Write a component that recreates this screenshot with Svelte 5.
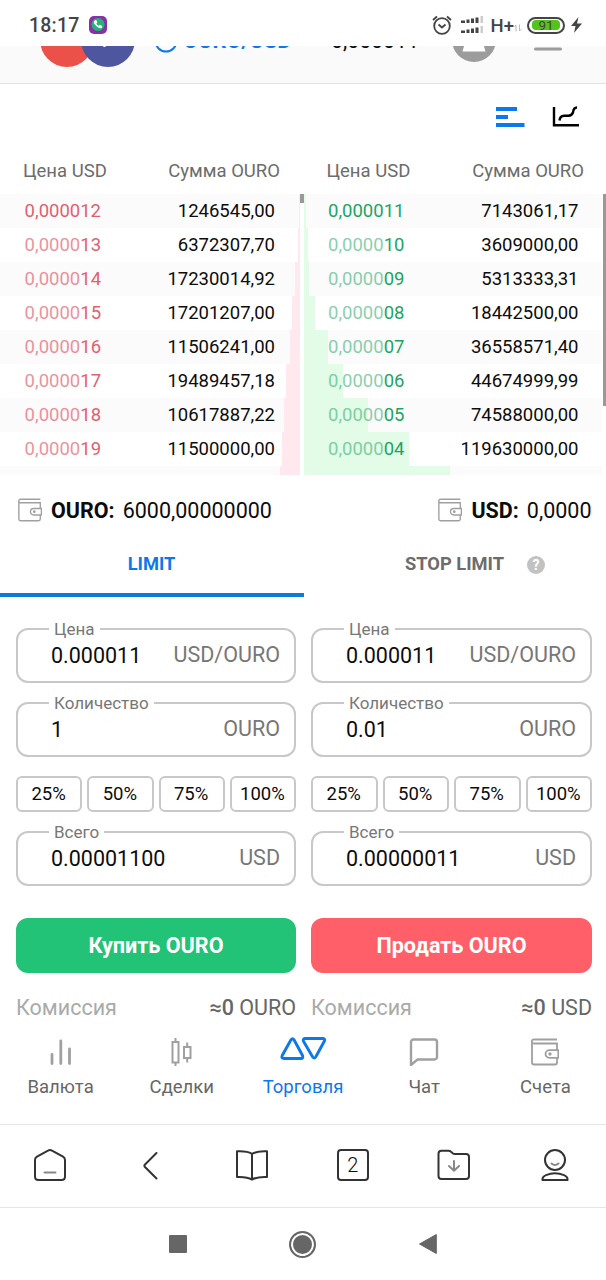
<script lang="ts">
    const asks = [
        { dim: "", price: "0,000012", amount: "1246545,00", depth: 1 },
        { dim: "0,0000", price: "13", amount: "6372307,70", depth: 2 },
        { dim: "0,0000", price: "14", amount: "17230014,92", depth: 5 },
        { dim: "0,0000", price: "15", amount: "17201207,00", depth: 8 },
        { dim: "0,0000", price: "16", amount: "11506241,00", depth: 10 },
        { dim: "0,0000", price: "17", amount: "19489457,18", depth: 14 },
        { dim: "0,0000", price: "18", amount: "10617887,22", depth: 16 },
        { dim: "0,0000", price: "19", amount: "11500000,00", depth: 18 },
        { dim: "", price: "", amount: "", depth: 20 },
    ];

    const bids = [
        { dim: "", price: "0,000011", amount: "7143061,17", depth: 2 },
        { dim: "0,0000", price: "10", amount: "3609000,00", depth: 4 },
        { dim: "0,0000", price: "09", amount: "5313333,31", depth: 5 },
        { dim: "0,0000", price: "08", amount: "18442500,00", depth: 11 },
        { dim: "0,0000", price: "07", amount: "36558571,40", depth: 24 },
        { dim: "0,0000", price: "06", amount: "44674999,99", depth: 39 },
        { dim: "0,0000", price: "05", amount: "74588000,00", depth: 64 },
        { dim: "0,0000", price: "04", amount: "119630000,00", depth: 105 },
        { dim: "", price: "", amount: "", depth: 146 },
    ];

    const forms = [
        {
            side: "buy",
            action: "Купить OURO",
            amount: "1",
            total: "0.00001100",
            feeUnit: "OURO",
        },
        {
            side: "sell",
            action: "Продать OURO",
            amount: "0.01",
            total: "0.00000011",
            feeUnit: "USD",
        },
    ];

    const percents = ["25%", "50%", "75%", "100%"];

    let tab = $state("limit");
</script>

{#snippet wallet(size)}
    <svg class="wallet" width={size} height={size} viewBox="0 0 28 28">
        <path
            d="M26 1.500H3.500A2 2 0 0 0 1 4v20.500a2 2 0 0 0 2 2h21a2 2 0 0 0 2-2V20M1 4.500Q1.500 5.500 3.500 5.500H26v6.500"
        />
        <path d="M27.300 12.200h-9a3.800 3.800 0 0 0 0 7.600h9z" />
        <circle cx="19" cy="16" r=".8" />
    </svg>
{/snippet}

{#snippet book(rows, side)}
    <div class="book-side {side}">
        {#each rows as row}
            <div class="book-row">
                <div class="depth" style="width: {row.depth}px"></div>
                <span class="price"><span class="dim">{row.dim}</span>{row.price}</span>
                <span class="amount">{row.amount}</span>
            </div>
        {/each}
    </div>
{/snippet}

{#snippet field(label, value, unit)}
    <fieldset class="field">
        <legend>{label}</legend>
        <div class="field-body">
            <span class="value">{value}</span>
            <span class="unit">{unit}</span>
        </div>
    </fieldset>
{/snippet}

<div class="screen">
    <div class="status">
        <span class="clock">18:17</span>
        <svg class="call" width="18" height="18" viewBox="0 0 18 18">
            <rect width="18" height="18" rx="5" fill="#8b2fa8" />
            <circle cx="9" cy="8.500" r="6.500" fill="#22b573" />
            <path
                d="M5.500 4.500l1.700-.5 1.200 2.300-1 1.100q.8 1.600 2.400 2.400l1.100-1 2.300 1.200-.5 1.900q-2 .9-4.600-1.200T5 7.500q-.4-2 .5-3z"
                fill="#fff"
            />
        </svg>
        <div class="status-right">
            <svg width="20" height="20" viewBox="0 0 20 20" class="alarm">
                <circle cx="10" cy="11" r="7.800" />
                <path d="M6.500 9.500L10 12.500l3.500-3M1 5l4-3.500M19 5l-4-3.500" />
            </svg>
            <svg class="signal" width="24" height="20" viewBox="0 0 24 20">
                {#each [0, 10] as y}
                    <path
                        d="M1 {y + 5.500}h4v2.500h-4zM6.500 {y + 4.500}h3v3.500h-3zM11 {y + 3.500}h3v4.500h-3zM15.500 {y + 2.500}h3v5.500h-3z"
                        fill="#444"
                    />
                    <path d="M20.500 {y + 1}h2.500v7h-2.500z" fill="#ccc" />
                {/each}
            </svg>
            <span class="network">H+</span>
            <svg class="traffic" width="8" height="8" viewBox="0 0 8 8">
                <path d="M2 7.500V1L.5 3M5.500.5V7L7.500 5" fill="none" stroke="#bbb" />
            </svg>
            <div class="battery"><span>91</span></div>
            <svg class="bolt" width="11" height="16" viewBox="0 0 11 16">
                <path d="M7.500 0L0 9h4.500L3 16l8-9.500H6z" fill="#444" />
            </svg>
        </div>
    </div>

    <header>
        <div class="coins">
            <span class="coin red"></span>
            <span class="coin blue">₽</span>
        </div>
        <svg class="swap" width="24" height="24" viewBox="0 0 24 24">
            <path d="M1.500 12a10.500 10.500 0 0 0 21 0" />
        </svg>
        <span class="pair">OURO/USD</span>
        <svg class="caret" width="8" height="8" viewBox="0 0 8 8">
            <path d="M0 1h8L4 6z" fill="#888" />
        </svg>
        <span class="rate">0,000011</span>
        <svg class="avatar" width="44" height="44" viewBox="0 0 44 44">
            <circle cx="22" cy="22" r="22" fill="#9c9c9c" />
            <path d="M13.500 23h17l3 10.500H10.500z" fill="#fff" />
        </svg>
        <svg class="burger" width="28" height="22" viewBox="0 0 28 22">
            <path d="M1.500 2h25M1.500 11h25M1.500 20h25" />
        </svg>
    </header>

    <main>
        <div class="view-switch">
            <svg width="30" height="22" viewBox="0 0 30 22">
                <path d="M1 3h21M1 11h12M1 19h28.500" stroke="#0d78ec" stroke-width="3.800" />
            </svg>
            <svg width="28" height="22" viewBox="0 0 28 22" fill="none" stroke="#000" stroke-width="2.400">
                <path d="M2 1v18.300h25" />
                <path d="M7.500 14.500q.5-4.500 4.500-4.700h4.500q3.500-.4 4.500-3.300 .500-5 4-5" />
            </svg>
        </div>

        <div class="book-head">
            <span>Цена USD</span><span>Сумма OURO</span>
            <span>Цена USD</span><span>Сумма OURO</span>
        </div>

        <div class="book">
            {@render book(asks, "ask")}
            {@render book(bids, "bid")}
            <div class="thumb inner"></div>
            <div class="thumb outer"></div>
        </div>

        <div class="balances">
            <div class="balance">{@render wallet(24)}<b>OURO:</b><span>6000,00000000</span></div>
            <div class="balance">{@render wallet(24)}<b>USD:</b><span>0,0000</span></div>
        </div>

        <div class="tabs">
            <button class:active={tab == "limit"} onclick={() => (tab = "limit")}>LIMIT</button>
            <button class:active={tab == "stop"} onclick={() => (tab = "stop")}>
                STOP LIMIT <span class="help">?</span>
            </button>
        </div>

        <div class="forms">
            {#each forms as form}
                <div class="form">
                    {@render field("Цена", "0.000011", "USD/OURO")}
                    {@render field("Количество", form.amount, "OURO")}
                    <div class="percents">
                        {#each percents as percent}
                            <button>{percent}</button>
                        {/each}
                    </div>
                    {@render field("Всего", form.total, "USD")}
                    <button class="submit {form.side}">{form.action}</button>
                    <div class="fee">
                        <span>Комиссия</span>
                        <span class="fee-value"><b>≈0</b> {form.feeUnit}</span>
                    </div>
                </div>
            {/each}
        </div>
    </main>

    <nav class="app-nav">
        <div class="nav-item">
            <svg width="28" height="28" viewBox="0 0 28 28">
                <path d="M5 16.500V25.500M13.800 3V25.500M22.500 11V25.500" stroke-width="2.800" stroke-linecap="round" />
            </svg>
            <span>Валюта</span>
        </div>
        <div class="nav-item">
            <svg width="28" height="28" viewBox="0 0 28 28" stroke-width="2">
                <path d="M4.500 4h6v20.500h-6zM7.500 0v4M7.500 24.500V28M16 9h6.500v11H16zM19.200 4.500V9M19.200 20v4.500" />
            </svg>
            <span>Сделки</span>
        </div>
        <div class="nav-item active">
            <svg class="trade" width="48" height="28" viewBox="0 0 48 28" stroke-width="2.900" stroke-linejoin="round">
                <path d="M12 1.800Q13.500-.2 15 1.800L23.500 17.500Q24.500 20.500 22 20.500H5Q2 20.500 3.200 17.500z" />
                <path d="M26 .5H44Q46.500.8 45.300 3.300L36.700 19Q35.200 21 33.700 19L24.500 3.300Q23.500.8 26 .5z" />
            </svg>
            <span>Торговля</span>
        </div>
        <div class="nav-item">
            <svg width="30" height="28" viewBox="0 0 30 28" stroke-width="2.400" stroke-linejoin="round">
                <path d="M4.500 1.500h21a2.500 2.500 0 0 1 2.500 2.500v15a2.500 2.500 0 0 1-2.500 2.500H8.500L2 27V4a2.500 2.500 0 0 1 2.500-2.500z" />
            </svg>
            <span>Чат</span>
        </div>
        <div class="nav-item">
            {@render wallet(28)}
            <span>Счета</span>
        </div>
    </nav>

    <div class="browser-bar">
        <svg width="34" height="34" viewBox="0 0 34 34">
            <path d="M17 2Q18 2 19 2.600L30 8.700Q32 10 32 12V28.500Q32 32 28.500 32H5.500Q2 32 2 28.500V12Q2 10 4 8.700L15 2.600Q16 2 17 2z" />
            <path d="M11.500 24.500h11" stroke="#888" />
        </svg>
        <svg width="34" height="34" viewBox="0 0 34 34">
            <path d="M22.500 5L11 16.500Q9.800 17.700 11 19L22.500 30.500" />
        </svg>
        <svg width="34" height="34" viewBox="0 0 34 34">
            <path d="M17 5.800Q12 2.800 2 3.300V29q10-.5 15 2.600Q22 28.500 32 29V3.300Q22 2.800 17 5.800zV31" />
        </svg>
        <div class="tab-count">2</div>
        <svg width="34" height="34" viewBox="0 0 34 34">
            <path d="M4.500 2.800h7q1.500 0 2.500 1l1.500 1.300q1 1 2.500 1H29q3 0 3 3V28q0 3-3 3H4.500q-3 0-3-3V5.800q0-3 3-3z" />
            <path d="M17 13v9.500M12 18l5 4.700 5-4.700" stroke="#888" />
        </svg>
        <svg width="34" height="34" viewBox="0 0 34 34">
            <circle cx="17" cy="12" r="10" />
            <path d="M4.500 32Q4 29 8 27.200q9-3.800 18 0 4 1.800 3.500 4.800z" />
            <path d="M13.500 15.500q3.500 3 7 0" stroke="#888" />
        </svg>
    </div>

    <div class="system-nav">
        <span><i class="square"></i></span>
        <span><i class="home"></i></span>
        <span>
            <svg width="18" height="22" viewBox="0 0 18 22">
                <path d="M17.300 1.500v19L.5 11z" fill="#666" stroke="#666" stroke-linejoin="round" />
            </svg>
        </span>
    </div>
</div>

<style>
    :global(body) {
        background: #fff;
    }

    .screen {
        width: 606px;
        height: 1280px;
        overflow: hidden;
        display: flex;
        flex-direction: column;
        font-family: Roboto, "Liberation Sans", sans-serif;
        font-size: 18.5px;
        color: #0c0c0c;
        background: #fff;
    }

    .screen * {
        box-sizing: border-box;
    }

    svg {
        display: block;
        flex: none;
    }

    button {
        font: inherit;
        color: inherit;
        padding: 0;
        border: none;
        background: none;
    }

    /* status bar */
    .status {
        position: relative;
        z-index: 2;
        flex: none;
        height: 46px;
        padding: 4px 24px 0 29px;
        display: flex;
        align-items: center;
        background: #fff;
        color: #444;
    }

    .clock {
        padding-top: 1px;
        font-size: 19.5px;
        font-weight: 500;
        letter-spacing: 0.2px;
    }

    .call {
        margin-left: 10px;
    }

    .status-right {
        margin-left: auto;
        display: flex;
        align-items: center;
    }

    .alarm {
        fill: none;
        stroke: #444;
        stroke-width: 1.8;
    }

    .signal {
        margin-left: 8px;
    }

    .network {
        margin-left: 7px;
        padding-top: 1px;
        font-size: 18.5px;
        font-weight: 500;
    }

    .traffic {
        margin: 6px 5px 0 0;
    }

    .battery {
        width: 38px;
        height: 17px;
        border: 2px solid #444;
        border-radius: 9px;
        padding: 1.5px 3px;
        display: flex;
    }

    .battery span {
        flex: 1;
        border-radius: 4px;
        background: #52c41a;
        font-size: 13.5px;
        line-height: 11px;
        text-align: center;
    }

    .bolt {
        margin-left: 6px;
    }

    /* page header, scrolled under the status bar */
    header {
        flex: none;
        height: 84px;
        margin-top: -46px;
        padding: 0 44px 4px 40px;
        display: flex;
        align-items: center;
        background: #fafafa;
        border-bottom: 1px solid #e2e2e2;
    }

    .coins {
        display: flex;
    }

    .coin {
        width: 54px;
        height: 54px;
        border-radius: 50%;
        display: flex;
        align-items: center;
        justify-content: center;
        color: #fff;
    }

    .coin.red {
        background: #eb5148;
    }

    .coin.blue {
        margin-left: -13px;
        background: #4e569f;
        font-size: 22px;
    }

    .swap {
        margin: 2px 0 0 19px;
        fill: none;
        stroke: #0d78ec;
        stroke-width: 2;
    }

    .pair {
        width: 121px;
        margin-left: 5px;
        padding-top: 2px;
        font-size: 21.8px;
        font-weight: 700;
        color: #0d78ec;
    }

    .caret {
        margin-top: 2px;
    }

    .rate {
        margin-left: 19px;
        padding-top: 2px;
        font-size: 21.3px;
    }

    .avatar {
        margin-left: auto;
    }

    .burger {
        margin-left: 38px;
        stroke: #9c9c9c;
        stroke-width: 3;
        stroke-linecap: round;
    }

    /* order book */
    .view-switch {
        height: 64px;
        padding: 2px 26px 0 0;
        display: flex;
        align-items: center;
        justify-content: flex-end;
        gap: 27px;
    }

    .book-head {
        height: 46px;
        display: grid;
        grid-template-columns: 140px 140px 1fr 140px;
        align-items: center;
        padding: 0 23px 0 23px;
        color: #6c6c6c;
    }

    .book-head span:nth-child(2n) {
        margin-right: -1px;
        text-align: right;
        white-space: nowrap;
    }

    .book-head span:nth-child(2) {
        margin-right: 23px;
        margin-left: -30px;
    }

    .book-head span:nth-child(3) {
        margin-left: 23.5px;
    }

    .book {
        position: relative;
        height: 281px;
        overflow: hidden;
        display: flex;
        gap: 4px;
    }

    .book-side.ask {
        width: 300px;
    }

    .book-side.bid {
        width: 298px;
    }

    .book-row {
        position: relative;
        height: 34px;
        padding: 0 23.5px 0 24px;
        display: flex;
        align-items: center;
        justify-content: space-between;
    }

    .ask .book-row {
        padding: 0 25px 0 24.6px;
    }

    .book-row:nth-child(2n + 1) {
        background: #fbfbfb;
    }

    .depth {
        position: absolute;
        top: 0;
        bottom: 0;
    }

    .ask .depth {
        right: 0;
        background: #ffe9ee;
    }

    .bid .depth {
        left: 0;
        background: #e2fce7;
    }

    .price,
    .amount {
        position: relative;
    }

    .ask .price {
        color: #e25f70;
    }

    .bid .price {
        color: #1ca566;
    }

    .dim {
        opacity: 0.68;
    }

    .bid .dim {
        opacity: 0.52;
    }

    .thumb {
        position: absolute;
        top: 0;
        background: #999;
    }

    .thumb.inner {
        left: 300px;
        width: 4px;
        height: 9px;
    }

    .thumb.outer {
        right: 0;
        width: 3px;
        height: 212px;
    }

    .balances {
        height: 70px;
        padding: 0 14.5px 0 17.5px;
        display: flex;
        align-items: center;
        justify-content: space-between;
        font-size: 21.5px;
    }

    .balance {
        display: flex;
        align-items: center;
    }

    .balance b {
        margin: 0 8px 0 9.5px;
    }

    .wallet {
        margin-top: -1px;
        fill: none;
        stroke: #a0a0a0;
        stroke-width: 1.6;
    }

    .nav-item .wallet {
        margin-top: 0;
        stroke-width: 1.8;
    }

    .tabs {
        height: 52px;
        display: grid;
        grid-template-columns: 303px 303px;
        font-size: 18.3px;
        font-weight: 700;
        color: #6c6c6c;
    }

    .tabs button {
        padding-bottom: 11px;
        display: flex;
        align-items: center;
        justify-content: center;
        border-bottom: 4px solid transparent;
    }

    .tabs button.active {
        margin-right: -1px;
        padding-right: 1px;
        color: #0d78ec;
        border-color: #1078de;
    }

    .help {
        width: 18px;
        height: 18px;
        margin: 2px -41px 0 23px;
        border-radius: 50%;
        background: #c2c2c2;
        color: #fff;
        font-size: 14px;
        font-weight: 700;
        line-height: 18px;
    }

    /* order forms */
    .forms {
        padding: 31px 14px 0 16px;
        display: grid;
        grid-template-columns: 280px 281px;
        gap: 15px;
    }

    .form {
        display: flex;
        flex-direction: column;
        gap: 19px;
    }

    .field {
        height: 55px;
        min-width: 0;
        margin: 0;
        padding: 0 14px 0 33px;
        border: 2px solid #c8c8c8;
        border-radius: 12px;
    }

    .field legend {
        height: 2px;
        margin-left: -2px;
        padding: 0 5px;
        font-size: 17px;
        line-height: 2px;
        color: #777;
    }

    .field-body {
        height: 51px;
        padding-bottom: 1px;
        display: flex;
        align-items: center;
        justify-content: space-between;
        font-size: 21.5px;
    }

    .unit {
        margin-top: -2px;
        color: #777;
    }

    .percents {
        display: grid;
        grid-template-columns: repeat(4, 1fr);
        gap: 5px;
    }

    .percents button {
        height: 36px;
        padding-right: 1px;
        border: 2px solid #c8c8c8;
        border-radius: 6px;
    }

    .submit {
        height: 55px;
        margin-top: 13px;
        border-radius: 12px;
        color: #fff;
        font-size: 21.6px;
        font-weight: 700;
    }

    .submit.buy {
        background: #22c277;
    }

    .submit.sell {
        background: #ff5f68;
    }

    .fee {
        height: 34px;
        margin-top: -2px;
        display: flex;
        align-items: center;
        justify-content: space-between;
        font-size: 21.5px;
        color: #aaa;
    }

    .fee-value {
        color: #666;
    }

    .fee b {
        font-weight: 500;
    }

    /* bottom bars */
    .app-nav {
        height: 100px;
        padding-top: 14px;
        display: grid;
        grid-template-columns: repeat(5, 1fr);
        color: #666;
    }

    .nav-item {
        display: flex;
        flex-direction: column;
        align-items: center;
        gap: 10px;
    }

    .nav-item svg {
        fill: none;
        stroke: #a0a0a0;
    }

    .nav-item.active {
        color: #0d78ec;
    }

    .nav-item.active svg {
        stroke: #0d78ec;
    }

    .trade {
        overflow: visible;
    }

    .browser-bar {
        height: 83px;
        padding: 0 1px 3px 0;
        border-top: 1px solid #e6e6e6;
        display: grid;
        grid-template-columns: repeat(6, 1fr);
        align-items: center;
        justify-items: center;
    }

    .browser-bar svg {
        fill: none;
        stroke: #333;
        stroke-width: 2;
        stroke-linecap: round;
        stroke-linejoin: round;
    }

    .tab-count {
        width: 32px;
        height: 32px;
        border: 2px solid #333;
        border-radius: 4px;
        font-size: 20px;
        font-weight: 300;
        line-height: 29px;
        text-align: center;
    }

    .system-nav {
        height: 73px;
        padding-right: 1px;
        border-top: 1px solid #e6e6e6;
        display: flex;
        align-items: center;
        justify-content: center;
    }

    .system-nav span {
        width: 125px;
        display: flex;
        justify-content: center;
    }

    .square {
        width: 18px;
        height: 18px;
        border-radius: 1px;
        background: #666;
    }

    .home {
        width: 27px;
        height: 27px;
        border: 2px solid #666;
        border-radius: 50%;
        background: #666;
        box-shadow: inset 0 0 0 2px #fff;
    }
</style>
